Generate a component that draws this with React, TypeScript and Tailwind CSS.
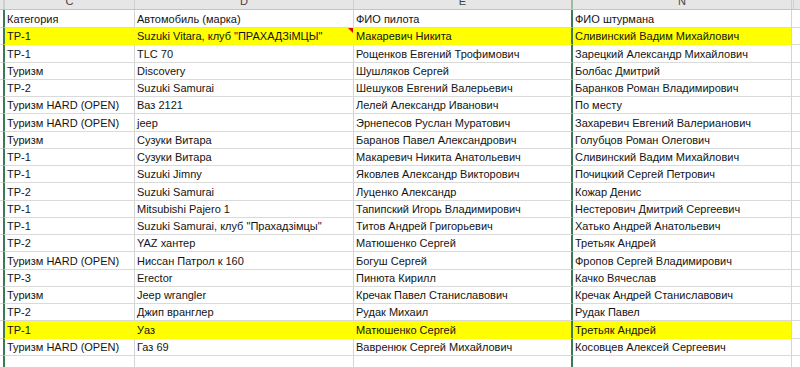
import React from "react";

type Row = { c: string; d: string; e: string; n: string; y?: boolean; note?: boolean };

const rows: Row[] = [
  { c: "ТР-1", d: "Suzuki Vitara, клуб \"ПРАХАДЗіМЦЫ\"", e: "Макаревич Никита", n: "Сливинский Вадим Михайлович", y: true, note: true },
  { c: "ТР-1", d: "TLC 70", e: "Рощенков Евгений Трофимович", n: "Зарецкий Александр Михайлович" },
  { c: "Туризм", d: "Discovery", e: "Шушляков Сергей", n: "Болбас Дмитрий" },
  { c: "ТР-2", d: "Suzuki Samurai", e: "Шешуков Евгений Валерьевич", n: "Баранков Роман Владимирович" },
  { c: "Туризм HARD (OPEN)", d: "Ваз 2121", e: "Лелей Александр Иванович", n: "По месту" },
  { c: "Туризм HARD (OPEN)", d: "jeep", e: "Эрнепесов Руслан Муратович", n: "Захаревич Евгений Валерианович" },
  { c: "Туризм", d: "Сузуки  Витара", e: "Баранов Павел Александрович", n: "Голубцов Роман Олегович" },
  { c: "ТР-1", d: "Сузуки Витара", e: "Макаревич Никита Анатольевич", n: "Сливинский Вадим Михайлович" },
  { c: "ТР-1", d: "Suzuki Jimny", e: "Яковлев Александр Викторович", n: "Почицкий Сергей Петрович" },
  { c: "ТР-2", d: "Suzuki Samurai", e: "Луценко Александр", n: "Кожар Денис" },
  { c: "ТР-1", d: "Mitsubishi Pajero 1", e: "Тапипский Игорь Владимирович", n: "Нестерович Дмитрий Сергеевич" },
  { c: "ТР-1", d: "Suzuki Samurai, клуб \"Прахадзімцы\"", e: "Титов Андрей Григорьевич", n: "Хатько Андрей Анатольевич" },
  { c: "ТР-2", d: "YAZ хантер", e: "Матюшенко Сергей", n: "Третьяк Андрей" },
  { c: "Туризм HARD (OPEN)", d: "Ниссан Патрол к 160", e: "Богуш Сергей", n: "Фропов Сергей Владимирович" },
  { c: "ТР-3", d: "Erector", e: "Пинюта Кирилл", n: "Качко Вячеслав" },
  { c: "Туризм", d: "Jeep wrangler", e: "Кречак Павел Станиславович", n: "Кречак Андрей Станиславович" },
  { c: "ТР-2", d: "Джип вранглер", e: "Рудак Михаил", n: "Рудак Павел" },
  { c: "ТР-1", d: "Уаз", e: "Матюшенко Сергей", n: "Третьяк Андрей", y: true },
  { c: "Туризм HARD (OPEN)", d: "Газ 69", e: "Вавренюк Сергей Михайлович", n: "Косовцев Алексей Сергеевич" },
];

function DataRow({ r, h }: { r: Row; h: string }) {
  const y = !!r.y;
  const bg = y ? "bg-[#ffff00]" : "bg-white";
  const rb = y ? "border-r-[#ffff00]" : "border-r-[#d4d4d4]";
  const bb = y ? "border-b-[#ffff00]" : "border-b-[#dadada]";
  return (
    <div className={`flex ${h}`}>
      <div className="w-[3px] shrink-0 bg-white border-b border-b-[#dadada]" />
      <div className={`w-[132px] shrink-0 flex items-center pt-[1px] pl-[2px] border-l-2 border-l-[#3b7a52] border-r border-b ${rb} ${bb} ${bg}`}>
        {r.c}
      </div>
      <div className={`relative w-[219px] shrink-0 flex items-center pt-[1px] pl-[2px] border-r border-b ${rb} ${bb} ${bg}`}>
        {r.d}
        {r.note && (
          <span className="absolute top-0 right-0 w-0 h-0 border-t-[5px] border-t-[#e00000] border-l-[5px] border-l-transparent" />
        )}
      </div>
      <div className={`w-[219px] shrink-0 flex items-center pt-[1px] pl-[2px] border-r-2 border-r-[#3b7a52] border-b ${bb} ${bg}`}>
        {r.e}
      </div>
      <div className={`w-[219px] shrink-0 flex items-center pt-[1px] pl-[2px] border-r border-r-[#d4d4d4] border-b ${bb} ${bg}`}>
        {r.n}
      </div>
      <div className="flex-1 bg-white border-b border-b-[#dadada]" />
    </div>
  );
}

export default function App() {
  return (
    <div
      className="w-[800px] h-[367px] overflow-hidden bg-white text-[11px] text-[#141414] whitespace-nowrap"
      style={{ fontFamily: "'Liberation Sans', Arial, sans-serif" }}
    >
      {/* column letters band */}
      <div className="flex h-[10px] bg-[#e6e6e6] border-b border-b-[#c4c4c4] text-[#444] overflow-hidden">
        <div className="w-[3px] shrink-0" />
        <div className="w-[132px] shrink-0 flex items-end justify-center pb-[2px] leading-none border-l-2 border-l-[#cfcfcf] border-r border-r-[#cfcfcf]">C</div>
        <div className="w-[219px] shrink-0 flex items-end justify-center pb-[2px] leading-none border-r border-r-[#cfcfcf]">D</div>
        <div className="w-[219px] shrink-0 flex items-end justify-center pb-[2px] leading-none border-r-2 border-r-[#9fb8a8]">E</div>
        <div className="w-[219px] shrink-0 flex items-end justify-center pb-[2px] leading-none border-r border-r-[#cfcfcf]">N</div>
        <div className="w-[2px] shrink-0 border-r border-r-[#cfcfcf]" />
        <div className="flex-1" />
      </div>
      <DataRow r={{ c: "Категория", d: "Автомобиль (марка)", e: "ФИО пилота", n: "ФИО штурмана" }} h="h-[18px]" />
      {rows.map((r, i) => (
        <DataRow key={i} r={r} h="h-[17.25px]" />
      ))}
      <DataRow r={{ c: "", d: "", e: "", n: "" }} h="h-[17.25px]" />
    </div>
  );
}
